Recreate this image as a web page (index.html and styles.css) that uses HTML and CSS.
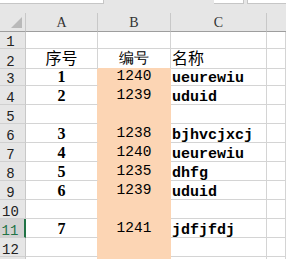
FILE: index.html
```html
<!DOCTYPE html>
<html>
<head>
<meta charset="utf-8">
<link rel="stylesheet" href="styles.css">
</head>
<body>
<div class="top">
  <div class="box box-name"></div>
  <div class="gap"></div>
  <div class="box box-mid"></div>
  <div class="box box-right"></div>
</div>
<div class="sheet">
  <div class="corner"><svg width="12" height="12" viewBox="0 0 12 12"><polygon points="11,0 11,11 0,11" fill="#b9b9b9"/></svg></div>
  <div class="ch">A</div><div class="ch">B</div><div class="ch">C</div><div class="ch ch-last"></div>

  <div class="rh">1</div><div class="c"></div><div class="c"></div><div class="c"></div><div class="c"></div>

  <div class="rh">2</div><div class="c ca cjk">序号</div><div class="c cb cjk fill-below">编号</div><div class="c cc cjk">名称</div><div class="c"></div>

  <div class="rh">3</div><div class="c ca num edge">1</div><div class="c cb fill">1240</div><div class="c cc txt">ueurewiu</div><div class="c"></div>
  <div class="rh">4</div><div class="c ca num edge">2</div><div class="c cb fill">1239</div><div class="c cc txt">uduid</div><div class="c"></div>
  <div class="rh">5</div><div class="c ca num edge"></div><div class="c cb fill"></div><div class="c cc txt"></div><div class="c"></div>
  <div class="rh">6</div><div class="c ca num edge">3</div><div class="c cb fill">1238</div><div class="c cc txt">bjhvcjxcj</div><div class="c"></div>
  <div class="rh">7</div><div class="c ca num edge">4</div><div class="c cb fill">1240</div><div class="c cc txt">ueurewiu</div><div class="c"></div>
  <div class="rh">8</div><div class="c ca num edge">5</div><div class="c cb fill">1235</div><div class="c cc txt">dhfg</div><div class="c"></div>
  <div class="rh">9</div><div class="c ca num edge">6</div><div class="c cb fill">1239</div><div class="c cc txt">uduid</div><div class="c"></div>
  <div class="rh">10</div><div class="c ca num edge"></div><div class="c cb fill"></div><div class="c cc txt"></div><div class="c"></div>
  <div class="rh rh-sel">11</div><div class="c ca num edge">7</div><div class="c cb fill">1241</div><div class="c cc txt">jdfjfdj</div><div class="c"></div>
  <div class="rh">12</div><div class="c ca num edge"></div><div class="c cb fill"></div><div class="c cc txt"></div><div class="c"></div>
  <div class="rh"></div><div class="c edge"></div><div class="c fill"></div><div class="c"></div><div class="c"></div>
</div>
</body>
</html>
```
FILE: styles.css
```css
* { box-sizing: border-box; }
html, body {
  margin: 0;
  padding: 0;
  width: 286px;
  height: 259px;
  overflow: hidden;
  background: #e6e6e6;
}
.top {
  height: 13px;
  display: flex;
  align-items: flex-start;
  background: #e6e6e6;
}
.box {
  height: 4px;
  background: #fff;
  border-bottom: 1px solid #c6c6c6;
  border-right: 1px solid #c6c6c6;
}
.box-name { width: 104px; }
.gap { flex: 1; }
.box-mid { width: 30px; }
.box-right { width: 39px; margin-left: 3px; border-left: 1px solid #c6c6c6; border-right: none; }

.sheet {
  display: grid;
  grid-template-columns: 26px 72px 73px 96px 1fr;
  grid-template-rows: 19px 17px 20px 17px repeat(9, 19px) 10px;
  background: #fff;
}
.corner {
  background: #e6e6e6;
  border-right: 1px solid #c8c8c8;
  border-bottom: 1px solid #9e9e9e;
  display: flex;
  align-items: flex-end;
  justify-content: flex-end;
  padding: 0 2px 2px 0;
}
.corner svg { display: block; }
.ch {
  background: #e6e6e6;
  border-right: 1px solid #c8c8c8;
  border-bottom: 1px solid #9e9e9e;
  display: flex;
  align-items: flex-end;
  justify-content: center;
  padding-bottom: 1px;
  font-family: "Liberation Serif", serif;
  font-size: 14px;
  line-height: 14px;
  color: #333;
}
.ch-last { border-right: none; }
.rh {
  background: #e6e6e6;
  border-right: 1px solid #c8c8c8;
  border-bottom: 1px solid #d0d0d0;
  display: flex;
  align-items: flex-end;
  justify-content: center;
  padding-right: 4px;
  font-family: "Liberation Mono", "DejaVu Sans Mono", monospace;
  font-size: 14px;
  line-height: 12px;
  color: #222;
}
.rh-sel {
  background: #d2d2d2;
  color: #217346;
  border-right: 2px solid #217346;
}
.c {
  border-right: 1px solid #d4d4d4;
  border-bottom: 1px solid #d4d4d4;
  display: flex;
  align-items: flex-end;
  white-space: nowrap;
  color: #000;
}
.ca { justify-content: center; }
.cb { justify-content: center; }
.cc { justify-content: flex-start; padding-left: 1px; }
.cjk {
  font-family: "Noto Sans CJK SC", sans-serif;
  font-size: 16px;
  line-height: 17px;
  padding-bottom: 2px;
}
.num {
  font-family: "Liberation Serif", serif;
  font-weight: bold;
  font-size: 16px;
  line-height: 16px;
  padding-bottom: 0;
}
.cb {
  font-family: "Liberation Mono", monospace;
  font-size: 14.5px;
  line-height: 15px;
  padding-bottom: 1px;
}
.txt {
  font-family: "Liberation Mono", monospace;
  font-weight: bold;
  font-size: 15px;
  line-height: 12px;
  padding-bottom: 0;
}
.fill {
  background: #fcd5b4;
  border-right-color: #fcd5b4;
  border-bottom-color: #fcd5b4;
}
.fill-below { border-bottom-color: #fcd5b4; }
.edge { border-right-color: #fcd5b4; }
```
